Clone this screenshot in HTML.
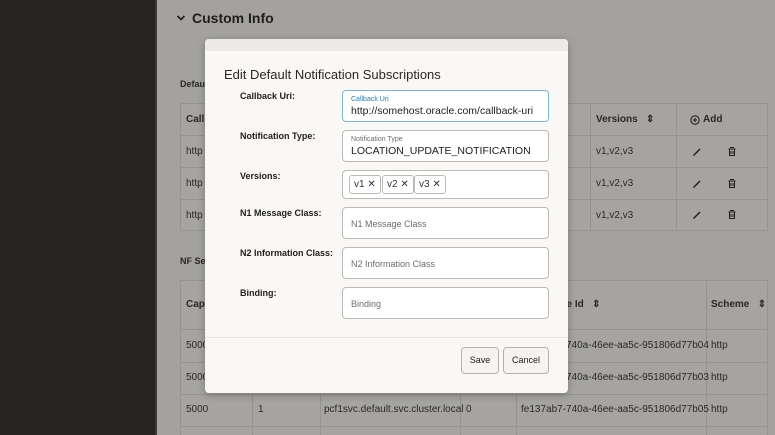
<!DOCTYPE html>
<html><head><meta charset="utf-8"><style>
*{margin:0;padding:0;box-sizing:border-box}
html,body{width:775px;height:435px;overflow:hidden}
body{position:relative;background:#a3a2a0;font-family:"Liberation Sans",sans-serif;color:#1e1d1b}
.a{position:absolute}
.side{left:0;top:0;width:157px;height:435px;background:#272421;border-right:2px solid #3b3936}
.t{font-size:10px;color:#2a2826;white-space:nowrap}
.hl{background:#959492;height:1px}
.vl{background:#959492;width:1px}
.tb{background:#a5a4a2}
.dlg{left:205px;top:39px;width:363px;height:354px;background:#f9f8f6;border-radius:4px;box-shadow:0 2px 8px rgba(0,0,0,.25);overflow:hidden}
.lbl{font-size:9px;font-weight:bold;color:#1e1d1b;left:35px}
.inp{left:137px;width:207px;height:32px;border:1px solid #bdbab6;border-radius:4px;background:#fff}
.ph{font-size:9px;color:#6f6c68;position:absolute;left:8px;top:11px}
.fl{font-size:7px;color:#6f6c68;position:absolute;left:8px;top:5px}
.val{font-size:10.5px;color:#1e1d1b;position:absolute;left:8px;top:14px;white-space:nowrap}
.chip{position:absolute;top:4px;height:19px;border:1px solid #bdbab6;border-radius:3px;font-size:10px;padding:3px 4px;color:#333}
.btn{position:absolute;top:308px;height:27px;border:1px solid #b5b2ae;border-radius:4px;background:#f5f4f2;font-size:9px;text-align:center;line-height:25px}
</style></head><body>
<div class="a side"></div>
<svg class="a" style="left:176px;top:14px" width="10" height="8" viewBox="0 0 10 8"><path d="M1.5 2 L5 5.5 L8.5 2" fill="none" stroke="#1e1d1b" stroke-width="1.6"/></svg>
<div class="a" style="left:192px;top:10px;font-size:14px;font-weight:bold;color:#1e1d1b">Custom Info</div>
<div class="a t" style="left:180px;top:79px;font-weight:bold;font-size:9px">Defau</div>
<div class="a tb" style="left:180px;top:103px;width:588px;height:128px;border:1px solid #959492"></div>
<div class="a hl" style="left:180px;top:135px;width:588px"></div>
<div class="a hl" style="left:180px;top:167px;width:588px"></div>
<div class="a hl" style="left:180px;top:199px;width:588px"></div>
<div class="a vl" style="left:590px;top:103px;height:128px"></div>
<div class="a vl" style="left:676px;top:103px;height:128px"></div>
<div class="a t" style="left:186px;top:114px;font-weight:bold">Callb</div>
<div class="a t" style="left:186px;top:146px">http</div>
<div class="a t" style="left:186px;top:178px">http</div>
<div class="a t" style="left:186px;top:210px">http</div>
<div class="a t" style="left:596px;top:114px;font-weight:bold">Versions &nbsp;&nbsp;⇕</div>
<svg class="a" style="left:690px;top:115px" width="10" height="10" viewBox="0 0 10 10"><circle cx="5" cy="5" r="4.2" fill="none" stroke="#1e1d1b" stroke-width="1"/><path d="M5 2.8V7.2M2.8 5H7.2" stroke="#1e1d1b" stroke-width="1"/></svg>
<div class="a t" style="left:703px;top:114px;font-weight:bold">Add</div>
<div class="a t" style="left:596px;top:146px">v1,v2,v3</div>
<div class="a t" style="left:596px;top:178px">v1,v2,v3</div>
<div class="a t" style="left:596px;top:210px">v1,v2,v3</div>
<svg width="0" height="0" style="position:absolute"><defs>
<g id="pen"><path d="M1.5 8.5 L7.5 2.5 L8.5 3.5 L2.5 9.5 L1 10 Z" fill="#1e1d1b"/></g>
<g id="bin"><path d="M3 1.5H7M1.5 3H8.5M2.5 3V9.5H7.5V3M4 5V8M6 5V8" fill="none" stroke="#1e1d1b" stroke-width="1"/></g>
</defs></svg>
<svg class="a" style="left:692px;top:146px" width="10" height="11"><use href="#pen"/></svg>
<svg class="a" style="left:727px;top:146px" width="10" height="11"><use href="#bin"/></svg>
<svg class="a" style="left:692px;top:178px" width="10" height="11"><use href="#pen"/></svg>
<svg class="a" style="left:727px;top:178px" width="10" height="11"><use href="#bin"/></svg>
<svg class="a" style="left:692px;top:209px" width="10" height="11"><use href="#pen"/></svg>
<svg class="a" style="left:727px;top:209px" width="10" height="11"><use href="#bin"/></svg>
<div class="a t" style="left:180px;top:256px;font-weight:bold;font-size:9px">NF Se</div>
<div class="a tb" style="left:180px;top:280px;width:588px;height:160px;border:1px solid #959492"></div>
<div class="a hl" style="left:180px;top:329px;width:588px"></div>
<div class="a hl" style="left:180px;top:362px;width:588px"></div>
<div class="a hl" style="left:180px;top:394px;width:588px"></div>
<div class="a hl" style="left:180px;top:426px;width:588px"></div>
<div class="a vl" style="left:252px;top:280px;height:160px"></div>
<div class="a vl" style="left:320px;top:280px;height:160px"></div>
<div class="a vl" style="left:460px;top:280px;height:160px"></div>
<div class="a vl" style="left:516px;top:280px;height:160px"></div>
<div class="a vl" style="left:706px;top:280px;height:160px"></div>
<div class="a t" style="left:186px;top:299px;font-weight:bold">Capa</div>
<div class="a t" style="left:546px;top:299px;font-weight:bold">tance Id &nbsp;&nbsp;⇕</div>
<div class="a t" style="left:711px;top:299px;font-weight:bold">Scheme &nbsp;&nbsp;⇕</div>
<div class="a t" style="left:186px;top:340px">5000</div>
<div class="a t" style="left:186px;top:372px">5000</div>
<div class="a t" style="left:186px;top:404px">5000</div>
<div class="a t" style="left:258px;top:404px">1</div>
<div class="a t" style="left:324px;top:404px">pcf1svc.default.svc.cluster.local</div>
<div class="a t" style="left:466px;top:404px">0</div>
<div class="a t" style="left:566px;top:340px">740a-46ee-aa5c-951806d77b04</div>
<div class="a t" style="left:566px;top:372px">740a-46ee-aa5c-951806d77b03</div>
<div class="a t" style="left:521px;top:404px">fe137ab7-740a-46ee-aa5c-951806d77b05</div>
<div class="a t" style="left:711px;top:340px">http</div>
<div class="a t" style="left:711px;top:372px">http</div>
<div class="a t" style="left:711px;top:404px">http</div>
<div class="a dlg">
 <div class="a" style="left:0;top:0;width:363px;height:12px;background:#ebeae8"></div>
 <div class="a" style="left:19px;top:28px;font-size:13px;color:#2a2826">Edit Default Notification Subscriptions</div>
 <div class="a lbl" style="top:52px">Callback Uri:</div>
 <div class="a inp" style="top:51px;border-color:#7fb3d0"><span class="fl" style="color:#2a7cad">Callback Uri</span><span class="val">http://somehost.oracle.com/callback-uri</span></div>
 <div class="a lbl" style="top:92px">Notification Type:</div>
 <div class="a inp" style="top:91px"><span class="fl">Notification Type</span><span class="val">LOCATION_UPDATE_NOTIFICATION</span></div>
 <div class="a lbl" style="top:132px">Versions:</div>
 <div class="a inp" style="top:131px;height:29px"><span class="chip" style="left:6px">v1 ✕</span><span class="chip" style="left:39px">v2 ✕</span><span class="chip" style="left:71px">v3 ✕</span></div>
 <div class="a lbl" style="top:169px">N1 Message Class:</div>
 <div class="a inp" style="top:168px"><span class="ph">N1 Message Class</span></div>
 <div class="a lbl" style="top:209px">N2 Information Class:</div>
 <div class="a inp" style="top:208px"><span class="ph">N2 Information Class</span></div>
 <div class="a lbl" style="top:249px">Binding:</div>
 <div class="a inp" style="top:248px"><span class="ph">Binding</span></div>
 <div class="a" style="left:0;top:298px;width:363px;height:1px;background:#e8e6e3"></div>
 <div class="btn" style="left:256px;width:38px">Save</div>
 <div class="btn" style="left:298px;width:46px">Cancel</div>
</div>
</body></html>
